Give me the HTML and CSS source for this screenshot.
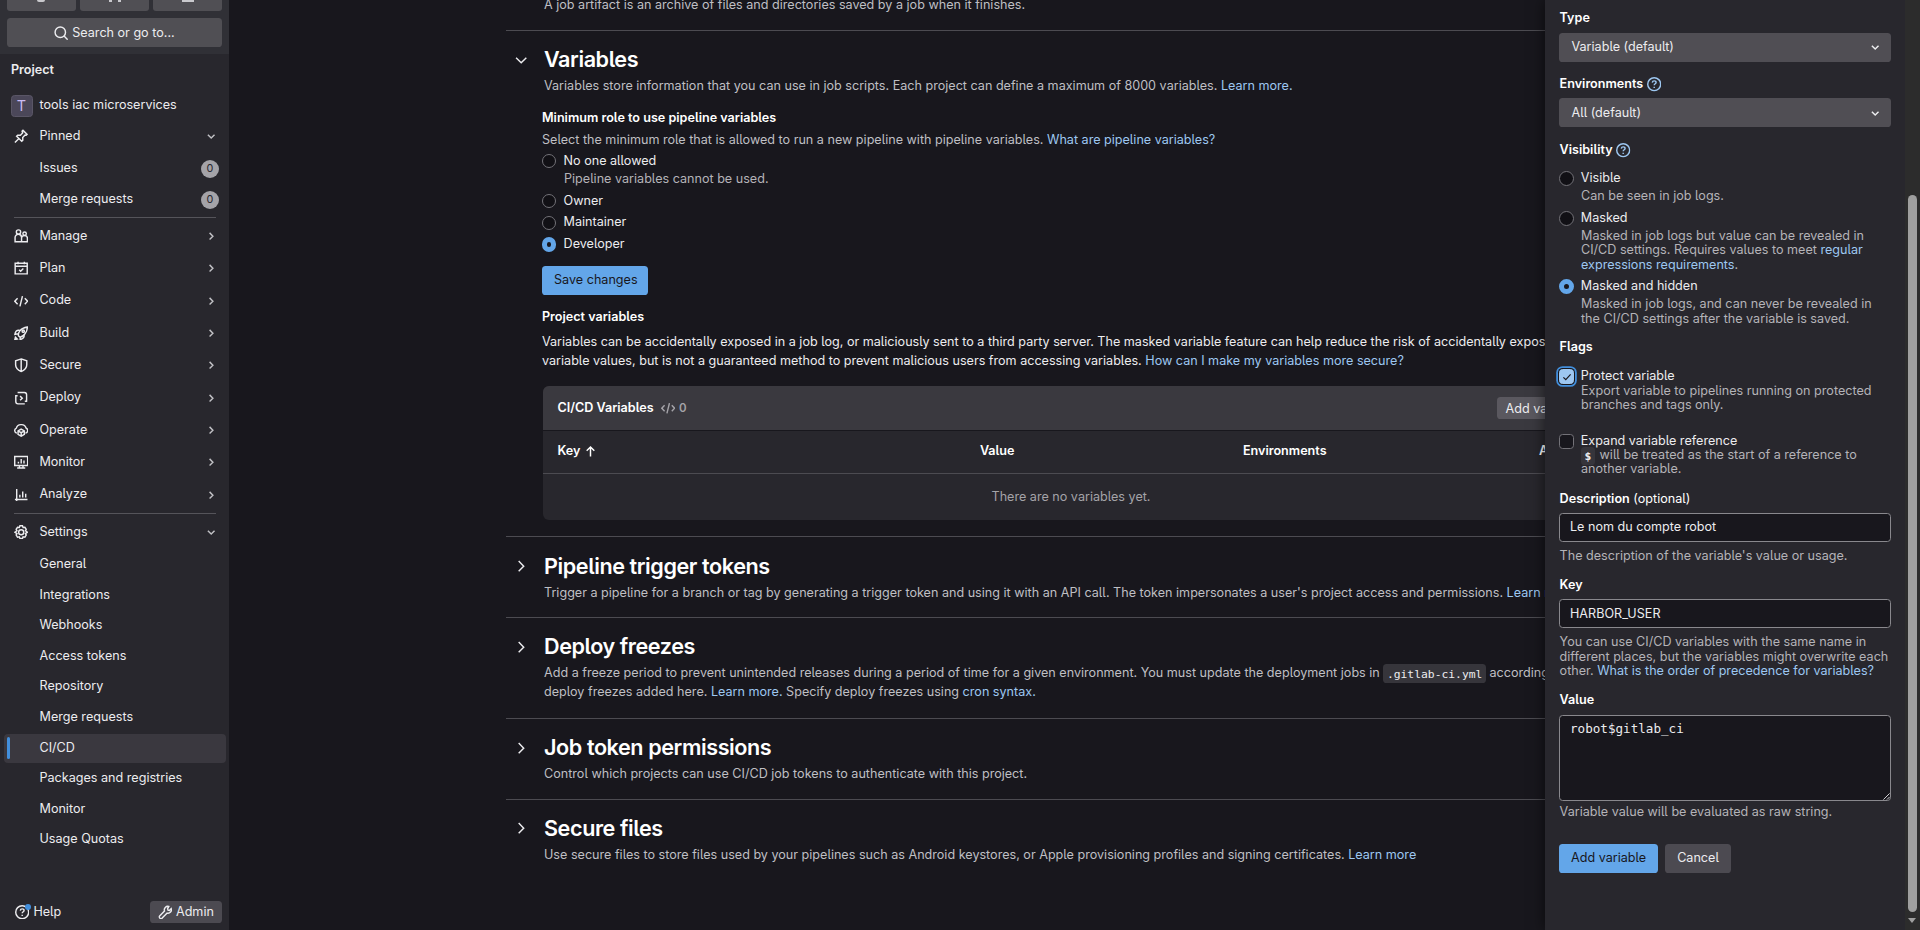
FILE: index.html
```html
<!DOCTYPE html>
<html lang="en">
<head>
<meta charset="utf-8">
<title>CI/CD Settings</title>
<link rel="stylesheet" href="styles.css">
</head>
<body>
<svg class="defs" width="0" height="0" aria-hidden="true">
  <symbol id="chev-down" viewBox="0 0 16 16"><path d="M4.3 6.4 8 10.1l3.7-3.7"/></symbol>
  <symbol id="chev-right" viewBox="0 0 16 16"><path d="M6.2 4.3 9.9 8l-3.7 3.7"/></symbol>
  <symbol id="chev-lg-down" viewBox="0 0 16 16"><path d="m2.3 5.2 5.7 5.6 5.7-5.6"/></symbol>
  <symbol id="chev-lg-right" viewBox="0 0 16 16"><path d="m5.2 2.3 5.6 5.7-5.6 5.7"/></symbol>
  <symbol id="search" viewBox="0 0 16 16"><circle cx="7" cy="7" r="5.8"/><path d="m11.2 11.2 4 4"/></symbol>
  <symbol id="pin" viewBox="0 0 16 16"><path d="m1 15 4.8-4.8M10 1.5 14.5 6l-1 1-1.2-.2-2.6 2.6.1 3-1.2 1.2L2.9 8l1.2-1.2 3 .1 2.6-2.6L9 2.5z"/></symbol>
  <symbol id="manage" viewBox="0 0 16 16"><circle cx="5" cy="3.4" r="2.4"/><circle cx="11.8" cy="5.3" r="1.9"/><path d="M8 14.2H1.2V9.5A3.5 3.5 0 0 1 5 5.9c1.8 0 3.4 1.5 3.4 3.6M8.4 14.2V10.4a3 3 0 0 1 3.3-3.1 3 3 0 0 1 3.2 3.1v3.8z"/></symbol>
  <symbol id="plan" viewBox="0 0 16 16"><path d="M1.3 2.6h13.4v11.700H1.3zM1.3 5.9h13.4M4.5.8v2.800M11.5.8v2.800M5.8 9.800l1.6 1.6 3-3"/></symbol>
  <symbol id="code" viewBox="0 0 16 16"><path d="M4 4.7.9 8 4 11.3M12 4.7 15.1 8 12 11.3M9.4 2.3 6.6 13.7"/></symbol>
  <symbol id="rocket" viewBox="0 0 16 16"><path d="M5 11c-.7-3 1.5-8.5 9.800-9.800C15 7 10.5 11.5 6.8 12.5zM6.2 4.8C3 4 1.5 6.5 1 9.2l3.7-.6M11.2 9.8c.7 3.2-1.8 4.8-4.4 5.3l.2-3M1 15l2.6-.5-2-2z"/><circle cx="10.3" cy="5.7" r="1.3"/></symbol>
  <symbol id="shield" viewBox="0 0 16 16"><path d="M8 1 14.2 3v4.5c0 3.6-2.5 6-6.2 7.7C4.3 13.5 1.8 11.1 1.8 7.5V3zM8 1v14"/></symbol>
  <symbol id="deploy" viewBox="0 0 16 16"><path d="M4 1.7h7.5A2.5 2.5 0 0 1 14 4.2v7.3M4 5.2H2v6.6a2.5 2.5 0 0 0 2.5 2.5H12M12 11.5h2.7M6.8 5.7 9.2 8l-2.4 2.4"/></symbol>
  <symbol id="operate" viewBox="0 0 16 16"><path d="M3.3 11.3A3 3 0 0 1 2.6 5.6 5.3 5.3 0 0 1 8 1.8a5.3 5.3 0 0 1 5.4 3.8 3 3 0 0 1-.7 5.7M8 6.8l3.5 2v3.9L8 14.7l-3.5-2V8.8zM4.7 9 8 10.8 11.3 9M8 10.8v3.7"/></symbol>
  <symbol id="monitor" viewBox="0 0 16 16"><path d="M.8 1.7h14.4v10H.8zM3.5 14.5h9M6 11.7v2.8M10 11.7v2.8M4.9 7.5v2M8 4.5v5M11.1 6v3.5"/></symbol>
  <symbol id="analyze" viewBox="0 0 16 16"><path d="M3 1v13.5M1 12.7h14M6.5 7.5v3M9.7 4v6.5M13 6.5v4"/></symbol>
  <symbol id="gear" viewBox="0 0 16 16"><path d="M6.6.9h2.8l.7 1.9 2-.3 1.5 2.3L12.7 6.5 15 8l-2.3 1.5.9 1.7-1.5 2.3-2-.3-.7 1.9H6.6l-.7-1.9-2 .3-1.5-2.3.9-1.700L1 8l2.3-1.5-.9-1.7 1.5-2.3 2 .3z"/><circle cx="8" cy="8" r="2.8"/></symbol>
  <symbol id="help" viewBox="0 0 16 16"><circle cx="8" cy="8" r="7.2"/><path d="M5.9 6.2C6 4.9 6.9 4.3 8 4.3c1.2 0 2.1.7 2.1 1.8C10.1 7.5 8 7.6 8 9.3M8 10.9v1.3"/></symbol>
  <symbol id="wrench" viewBox="0 0 16 16"><path d="m10.7 4.1.4 1.6 1.5.4 2.1-2.1c.9 2.9-1.4 5.6-4.5 5L4.7 14.500a1.6 1.6 0 0 1-2.7 0 1.6 1.6 0 0 1-.2-2.3L7.2 6.6C6.3 3.7 8.9.8 12 1.6z"/></symbol>
  <symbol id="arrow-up" viewBox="0 0 16 16"><path d="M8 14V2.6M3.3 7 8 2.4 12.7 7"/></symbol>
  <symbol id="check" viewBox="0 0 16 16"><path d="m3.2 8.4 3.2 3.2 6.4-7"/></symbol>
</svg>

<div class="app">
  <aside class="sidebar">
    <div class="top">
      <div class="counts">
        <span class="count"><i class="bit bit-a"></i></span>
        <span class="count"><i class="bit bit-b"></i><i class="bit bit-b"></i></span>
        <span class="count"><i class="bit bit-c"></i></span>
      </div>
      <div class="search"><svg class="ic"><use href="#search"/></svg><span>Search or go to...</span></div>
    </div>
    <div class="context">Project</div>
    <nav class="nav">
      <a class="row project"><span class="avatar">T</span><span>tools iac microservices</span></a>
      <a class="row"><svg class="ic"><use href="#pin"/></svg><span class="lbl">Pinned</span><svg class="ic chev"><use href="#chev-down"/></svg></a>
      <a class="row sub pin"><span class="lbl">Issues</span><span class="badge">0</span></a>
      <a class="row sub pin"><span class="lbl">Merge requests</span><span class="badge">0</span></a>
      <hr class="sep">
      <a class="row"><svg class="ic"><use href="#manage"/></svg><span class="lbl">Manage</span><svg class="ic chev"><use href="#chev-right"/></svg></a>
      <a class="row"><svg class="ic"><use href="#plan"/></svg><span class="lbl">Plan</span><svg class="ic chev"><use href="#chev-right"/></svg></a>
      <a class="row"><svg class="ic"><use href="#code"/></svg><span class="lbl">Code</span><svg class="ic chev"><use href="#chev-right"/></svg></a>
      <a class="row"><svg class="ic"><use href="#rocket"/></svg><span class="lbl">Build</span><svg class="ic chev"><use href="#chev-right"/></svg></a>
      <a class="row"><svg class="ic"><use href="#shield"/></svg><span class="lbl">Secure</span><svg class="ic chev"><use href="#chev-right"/></svg></a>
      <a class="row"><svg class="ic"><use href="#deploy"/></svg><span class="lbl">Deploy</span><svg class="ic chev"><use href="#chev-right"/></svg></a>
      <a class="row"><svg class="ic"><use href="#operate"/></svg><span class="lbl">Operate</span><svg class="ic chev"><use href="#chev-right"/></svg></a>
      <a class="row"><svg class="ic"><use href="#monitor"/></svg><span class="lbl">Monitor</span><svg class="ic chev"><use href="#chev-right"/></svg></a>
      <a class="row"><svg class="ic"><use href="#analyze"/></svg><span class="lbl">Analyze</span><svg class="ic chev"><use href="#chev-right"/></svg></a>
      <hr class="sep">
      <a class="row"><svg class="ic"><use href="#gear"/></svg><span class="lbl">Settings</span><svg class="ic chev"><use href="#chev-down"/></svg></a>
      <a class="row sub">General</a>
      <a class="row sub">Integrations</a>
      <a class="row sub">Webhooks</a>
      <a class="row sub">Access tokens</a>
      <a class="row sub">Repository</a>
      <a class="row sub">Merge requests</a>
      <a class="row sub active">CI/CD</a>
      <a class="row sub">Packages and registries</a>
      <a class="row sub">Monitor</a>
      <a class="row sub">Usage Quotas</a>
    </nav>
    <div class="foot">
      <a class="help"><svg class="ic"><use href="#help"/></svg><i class="dot"></i><span>Help</span></a>
      <a class="admin"><svg class="ic"><use href="#wrench"/></svg><span>Admin</span></a>
    </div>
  </aside>

  <main class="main">
    <p class="desc intro">A job artifact is an archive of files and directories saved by a job when it finishes.</p>

    <section class="block variables">
      <svg class="toggle"><use href="#chev-lg-down"/></svg>
      <h2>Variables</h2>
      <p class="desc">Variables store information that you can use in job scripts. Each project can define a maximum of 8000 variables. <a>Learn more.</a></p>
      <div class="body">
        <h3>Minimum role to use pipeline variables</h3>
        <p class="hint">Select the minimum role that is allowed to run a new pipeline with pipeline variables. <a>What are pipeline variables?</a></p>
        <div class="roles">
          <label class="opt"><i class="radio"></i><span>No one allowed</span></label>
          <p class="opt-help">Pipeline variables cannot be used.</p>
          <label class="opt"><i class="radio"></i><span>Owner</span></label>
          <label class="opt"><i class="radio"></i><span>Maintainer</span></label>
          <label class="opt"><i class="radio on"></i><span>Developer</span></label>
        </div>
        <button class="btn primary save">Save changes</button>
        <h3 class="pv">Project variables</h3>
        <p class="text">Variables can be accidentally exposed in a job log, or maliciously sent to a third party server. The masked variable feature can help reduce the risk of accidentally exposing<br>variable values, but is not a guaranteed method to prevent malicious users from accessing variables. <a>How can I make my variables more secure?</a></p>
        <div class="card">
          <div class="card-head"><b>CI/CD Variables</b><svg class="ic"><use href="#code"/></svg><span class="num">0</span><button class="btn small">Add variable</button></div>
          <div class="cols"><b>Key <svg class="ic"><use href="#arrow-up"/></svg></b><b>Value</b><b>Environments</b><b>Actions</b></div>
          <div class="empty">There are no variables yet.</div>
        </div>
      </div>
    </section>

    <section class="block">
      <svg class="toggle"><use href="#chev-lg-right"/></svg>
      <h2>Pipeline trigger tokens</h2>
      <p class="desc">Trigger a pipeline for a branch or tag by generating a trigger token and using it with an API call. The token impersonates a user's project access and permissions. <a>Learn more.</a></p>
    </section>
    <section class="block freezes">
      <svg class="toggle"><use href="#chev-lg-right"/></svg>
      <h2>Deploy freezes</h2>
      <p class="desc">Add a freeze period to prevent unintended releases during a period of time for a given environment. You must update the deployment jobs in <code>.gitlab-ci.yml</code> according to the<br>deploy freezes added here. <a>Learn more.</a> Specify deploy freezes using <a>cron syntax.</a></p>
    </section>
    <section class="block">
      <svg class="toggle"><use href="#chev-lg-right"/></svg>
      <h2>Job token permissions</h2>
      <p class="desc">Control which projects can use CI/CD job tokens to authenticate with this project.</p>
    </section>
    <section class="block">
      <svg class="toggle"><use href="#chev-lg-right"/></svg>
      <h2>Secure files</h2>
      <p class="desc">Use secure files to store files used by your pipelines such as Android keystores, or Apple provisioning profiles and signing certificates. <a>Learn more</a></p>
    </section>
  </main>

  <div class="drawer">
    <form class="form">
      <div class="flabel">Type</div>
      <div class="select"><span>Variable (default)</span><svg class="ic"><use href="#chev-down"/></svg></div>
      <div class="flabel env">Environments <svg class="ic"><use href="#help"/></svg></div>
      <div class="select second"><span>All (default)</span><svg class="ic"><use href="#chev-down"/></svg></div>
      <div class="flabel vis">Visibility <svg class="ic"><use href="#help"/></svg></div>
      <div class="vopts">
        <label class="opt"><i class="radio"></i><span>Visible</span></label>
        <p class="opt-help">Can be seen in job logs.</p>
        <label class="opt"><i class="radio"></i><span>Masked</span></label>
        <p class="opt-help">Masked in job logs but value can be revealed in<br>CI/CD settings. Requires values to meet <a>regular<br>expressions requirements</a>.</p>
        <label class="opt"><i class="radio on"></i><span>Masked and hidden</span></label>
        <p class="opt-help">Masked in job logs, and can never be revealed in<br>the CI/CD settings after the variable is saved.</p>
      </div>
      <div class="flabel flags">Flags</div>
      <label class="opt protect"><i class="check on"><svg><use href="#check"/></svg></i><span>Protect variable</span></label>
      <p class="opt-help tight">Export variable to pipelines running on protected<br>branches and tags only.</p>
      <label class="opt expand"><i class="check"></i><span>Expand variable reference</span></label>
      <p class="opt-help tight"><code>$</code> will be treated as the start of a reference to<br>another variable.</p>
      <div class="flabel descr">Description <span>(optional)</span></div>
      <div class="input">Le nom du compte robot</div>
      <p class="fhelp">The description of the variable's value or usage.</p>
      <div class="flabel key">Key</div>
      <div class="input user">HARBOR_USER</div>
      <p class="fhelp">You can use CI/CD variables with the same name in<br>different places, but the variables might overwrite each<br>other. <a>What is the order of precedence for variables?</a></p>
      <div class="flabel value">Value</div>
      <div class="input area">robot$gitlab_ci<svg class="grip" viewBox="0 0 8 8"><path d="M.5 7.5l7-7M4.5 7.5l3-3"/></svg></div>
      <p class="fhelp raw">Variable value will be evaluated as raw string.</p>
      <div class="actions"><span class="btn primary">Add variable</span><span class="btn neutral">Cancel</span></div>
    </form>
    <div class="scroll"><i class="thumb"></i><i class="arrow"></i></div>
  </div>
</div>
</body>
</html>
```
FILE: styles.css
```css
* { box-sizing: border-box; }
body {
  margin: 0;
  height: 930px;
  overflow: hidden;
  background: #18171d;
  color: #ececef;
  font: 12.6px/18.9px Inter, "Noto Sans", sans-serif;
  font-feature-settings: "cv05";
}
h2, h3, p { margin: 0; }
.defs { position: absolute; }
svg { fill: none; stroke: currentColor; stroke-width: 1.6; flex: none; }
a { color: #9dc7f1; text-decoration: none; }
.ic { width: 14.4px; height: 14.4px; }
.app { display: flex; height: 930px; overflow: hidden; position: relative; }

/* Sidebar */
.sidebar { width: 229px; flex: none; background: #28272d; display: flex; flex-direction: column; }
.top { height: 54px; flex: none; background: #303036; padding: 0 7px; }
.counts { display: flex; gap: 4px; height: 11px; }
.count { flex: 1; background: #504f54; border-radius: 0 0 3px 3px; display: flex; justify-content: center; gap: 6px; }
.bit { background: #c9c9cd; height: 2px; }
.bit-a { width: 8px; margin-right: 2px; border-radius: 0 0 2px 2px; }
.bit-b { width: 3px; }
.bit-c { width: 12px; }
.search { margin-top: 7px; height: 29px; border-radius: 3.6px; background: #504f54; display: flex; align-items: center; justify-content: center; gap: 3.5px; padding: 1px 0 0; }
.context { font-weight: 600; height: 19px; line-height: 19px; margin: 6px 0 0 11px; }
.nav { margin-top: 11.5px; padding: 0 3px 0 4px; }
.nav .row { display: flex; align-items: center; height: 28.8px; margin-bottom: 3.55px; padding: 0 10px; color: #ececef; border-radius: 4px; }
.row .ic { margin-right: 11px; }
.row .lbl { flex: 1; }
.row .chev { margin-right: -2.5px; color: #bfbfc3; }
.nav .project { height: 30px; margin-bottom: 1.5px; padding: 0 6.5px; gap: 7px; }
.avatar { width: 22px; height: 22px; border-radius: 3.6px; background: #4b4759; border: 1px solid #5a5666; color: #cbbcf5; font-size: 14.4px; line-height: 20px; text-align: center; }
.nav .sub { padding-left: 35.5px; margin-bottom: 1.8px; }
.nav .pin { margin-bottom: 2.2px; padding-right: 7px; }
.badge { width: 18px; height: 18px; border-radius: 9px; background: #a4a3a8; color: #28272d; font-size: 10.8px; line-height: 18px; text-align: center; }
.sep { border: 0; height: 1px; background: #55545a; margin: 2.6px 10px 4px; }
.nav .active { background: #3a383f; position: relative; }
.active::before { content: ""; position: absolute; left: 3px; top: 3px; width: 3px; height: 22px; border-radius: 2px; background: #428fdc; }
.foot { margin-top: auto; margin-bottom: 7px; height: 22px; padding: 0 7px 0 15px; display: flex; justify-content: space-between; align-items: center; }
.foot a { color: #ececef; display: flex; align-items: center; }
.help { gap: 4px; position: relative; }
.dot { position: absolute; left: 10px; top: 1px; width: 6px; height: 6px; border-radius: 50%; background: #428fdc; }
.foot .admin { width: 72px; height: 22px; background: #4c4a51; border-radius: 3.6px; justify-content: center; gap: 3.5px; }

/* Settings content */
.main { width: 1122px; margin-left: 277px; flex: none; }
.desc { color: #bfbfc3; white-space: nowrap; }
.intro { margin: -4px 0 15.1px 38px; }
.block { border-top: 1px solid #4c4b51; position: relative; padding: 14.4px 0 14.6px 38px; }
.block h2 { font-size: 21.6px; font-weight: 600; line-height: 28.8px; letter-spacing: -.42px; color: #fff; margin-bottom: 3px; }
.block.variables { padding-bottom: 16.3px; }
.block.freezes { padding-bottom: 16px; }
.toggle { position: absolute; left: 8px; top: 21.5px; width: 14.4px; height: 14.4px; stroke-width: 1.6; }
.body { margin: 13.3px 0 0 -2px; }
h3 { font-size: 12.6px; line-height: 18.9px; font-weight: 600; color: #fff; }
.hint { color: #bfbfc3; margin-top: 3px; }
.roles { margin-top: 2px; height: 113.8px; }
.opt { display: flex; align-items: center; height: 18px; color: #ececef; margin-bottom: 3.6px; }
.opt + .opt-help { margin-top: -3.6px; }
.opt-help { padding-left: 22px; line-height: 14.4px; color: #b4b3b8; margin-bottom: 5.6px; padding-top: 1.5px; }
.roles .opt-help { padding: .5px 0 1.9px 22px; margin-bottom: 3.6px; line-height: 16px; }
.radio { width: 14.4px; height: 14.4px; border: 1px solid #737278; border-radius: 50%; background: #111015; margin-right: 7.2px; flex: none; }
.radio.on { border: 5px solid #63a6e9; background: #18171d; }
.btn { border: 0; font: inherit; font-feature-settings: inherit; height: 29px; line-height: 28px; border-radius: 3.6px; padding: 0 12px; text-align: center; white-space: nowrap; }
.primary { background: #63a6e9; color: #18171d; }
.save { display: block; width: 106px; padding-bottom: 1px; }
.pv { margin-top: 12.8px; }
.text { margin-top: 6px; white-space: nowrap; }
.card { width: 1050px; margin: 15.5px 0 0 1px; border-radius: 6px; overflow: hidden; background: #28272d; height: 134px; }
.card-head { height: 44px; background: #3a393f; display: flex; align-items: center; padding: 0 14.4px; color: #fff; }
.card-head b, .cols b { font-weight: 600; }
.card-head .ic { margin-left: 7px; color: #a4a3a8; }
.num { color: #a4a3a8; margin-left: 4px; font-size: 11.5px; font-weight: 600; }
.btn.small { margin-left: auto; height: 22px; line-height: 21px; background: #5a585f; color: #ececef; width: 94px; margin-right: -12px; padding: 0 9px; text-align: left; }
.cols { height: 44px; border-top: 1px solid #18171d; border-bottom: 1px solid #4c4b51; display: grid; grid-template-columns: 422.5px 263px 296px 1fr; align-items: center; padding: 0 0 1px 14.4px; color: #fff; white-space: nowrap; }
.cols b { display: flex; align-items: center; gap: 4px; }
.cols .ic { width: 13px; height: 13px; stroke-width: 1.8; }
.empty { height: 46px; line-height: 46px; padding-left: 6px; text-align: center; color: #a4a3a8; }
code { font-family: "DejaVu Sans Mono", monospace; font-size: 11.34px; line-height: 14px; background: #36353b; border-radius: 3.6px; padding: 2.5px 3.6px; color: #ececef; }

/* Variable drawer */
.drawer { position: absolute; left: 1545px; top: 0; width: 375px; height: 930px; background: #28272d; display: flex; justify-content: space-between; box-shadow: 0 0 14px rgba(0, 0, 0, .6); }
.form { width: 332px; margin: 9px 0 0 14px; }
.flabel { font-weight: 600; color: #fff; height: 18.9px; display: flex; align-items: center; gap: 3.5px; padding-left: .6px; }
.flabel .ic { color: #9dc7f1; }
.flabel span { font-weight: 400; }
.select { margin-top: 5.1px; height: 29px; background: #504e54; border-radius: 3.6px; display: flex; align-items: center; justify-content: space-between; padding: 0 8.5px 0 12.5px; }
.env { margin-top: 13px; }
.second { margin-top: 4.1px; padding-top: 1px; }
.vis { margin-top: 13.9px; }
.vopts { margin-top: 10.2px; height: 168px; }
.form .radio, .form .check { width: 15px; height: 15px; margin-right: 6.8px; }
.protect { margin-top: 11px; }
.expand { margin-top: 19.4px; }
.form .opt-help.tight { padding-top: 0; margin-top: -5.6px; margin-bottom: 0; }
.tight code { font-size: 11.3px; font-weight: 700; line-height: 1; margin-right: 1px; }
.check { width: 14.4px; height: 14.4px; border: 1px solid #737278; border-radius: 3.6px; background: #18171d; margin-right: 7.2px; flex: none; display: flex; align-items: center; justify-content: center; }
.check.on { background: #9dc7f1; border-color: #9dc7f1; box-shadow: 0 0 0 1px #18171d, 0 0 0 2.8px #428fdc; color: #18171d; }
.check svg { width: 12px; height: 12px; }
.descr { margin-top: 13.2px; }
.input { margin-top: 4px; height: 29px; border: 1px solid #89888d; border-radius: 3.6px; background: #18171d; line-height: 26.5px; padding: 0 10px; }
.user { line-height: 28px; }
.fhelp { margin-top: 7.4px; padding-left: .6px; line-height: 14.4px; color: #b4b3b8; white-space: nowrap; }
.key { margin-top: 12.3px; }
.value { margin-top: 12.5px; }
.area { position: relative; margin-top: 5.3px; height: 86px; line-height: 18px; padding-top: 4px; font-family: "DejaVu Sans Mono", monospace; }
.raw { margin-top: 4px; }
.grip { position: absolute; right: 0; bottom: 0; width: 7px; height: 7px; stroke-width: 1; }
.actions { display: flex; gap: 7px; margin-top: 24.2px; }
.neutral { background: #4c4a51; }
.scroll { width: 15px; background: #2c2c2c; position: relative; }
.thumb { position: absolute; left: 3px; top: 195px; width: 9px; height: 717px; border-radius: 5px; background: #9f9f9f; }
.arrow { position: absolute; left: 3px; top: 918px; border: 4.5px solid transparent; border-top: 5px solid #9f9f9f; border-bottom: 0; }
```
